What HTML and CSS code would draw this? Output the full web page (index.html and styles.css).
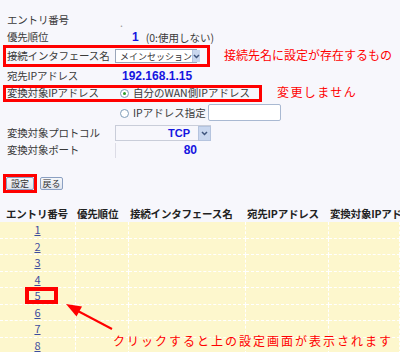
FILE: index.html
```html
<!DOCTYPE html>
<html lang="ja">
<head>
    <meta charset="utf-8">
    <meta name="viewport" content="width=device-width,initial-scale=1.0">
    <title>アドレス変換 設定</title>
    <link rel="stylesheet" href="styles.css">
</head>
<body>

    <div class="form">
        <div class="row">
            <span class="label">エントリ番号</span>
            <span class="dot">.</span>
        </div>
        <div class="row row-short">
            <span class="label">優先順位</span>
            <span class="num prio">1</span>
            <span class="note">(0:使用しない)</span>
        </div>
        <div class="row row-hl">
            <div class="hl hl-if">
                <span class="label">接続インタフェース名</span>
                <span class="select sel-if">
                    <span class="sel-text">メインセッション</span>
                    <span class="sel-btn">
                        <svg width="7" height="5" viewBox="0 0 7 5"><path d="M1 1 L3.5 3.5 L6 1" fill="none" stroke="#3f557d" stroke-width="1.5"/></svg>
                    </span>
                </span>
            </div>
            <span class="memo memo-if">接続先名に設定が存在するもの</span>
        </div>
        <div class="row">
            <span class="label">宛先IPアドレス</span>
            <span class="num addr">192.168.1.15</span>
        </div>
        <div class="row row-hl row-ip">
            <div class="hl hl-ip">
                <span class="label">変換対象IPアドレス</span>
                <span class="radio checked"></span>
                <span class="opt">自分のWAN側IPアドレス</span>
            </div>
            <span class="memo memo-ip">変更しません</span>
        </div>
        <div class="row row-tall">
            <span class="label"></span>
            <span class="radio"></span>
            <span class="opt">IPアドレス指定</span>
            <span class="text-input"></span>
        </div>
        <div class="row">
            <span class="label">変換対象プロトコル</span>
            <span class="select sel-proto">
                <span class="sel-value">TCP</span>
                <span class="sel-btn">
                    <svg width="7" height="5" viewBox="0 0 7 5"><path d="M1 1 L3.5 3.5 L6 1" fill="none" stroke="#3f557d" stroke-width="1.5"/></svg>
                </span>
            </span>
        </div>
        <div class="row row-short">
            <span class="label">変換対象ポート</span>
            <span class="port">80</span>
        </div>
    </div>

    <div class="buttons">
        <span class="btn-hl"><button class="btn btn-set">設定</button></span>
        <button class="btn btn-back">戻る</button>
    </div>

    <div class="list">
        <div class="grid">
            <div class="th th-first">エントリ番号</div>
            <div class="th">優先順位</div>
            <div class="th">接続インタフェース名</div>
            <div class="th">宛先IPアドレス</div>
            <div class="th">変換対象IPアドレス</div>

            <div class="td td-no"><a href="#">1</a></div><div class="td"></div><div class="td"></div><div class="td"></div><div class="td"></div>
            <div class="td td-no"><a href="#">2</a></div><div class="td"></div><div class="td"></div><div class="td"></div><div class="td"></div>
            <div class="td td-no"><a href="#">3</a></div><div class="td"></div><div class="td"></div><div class="td"></div><div class="td"></div>
            <div class="td td-no"><a href="#">4</a></div><div class="td"></div><div class="td"></div><div class="td"></div><div class="td"></div>
            <div class="td td-no"><a href="#">5</a></div><div class="td"></div><div class="td"></div><div class="td"></div><div class="td"></div>
            <div class="td td-no"><a href="#">6</a></div><div class="td"></div><div class="td"></div><div class="td"></div><div class="td"></div>
            <div class="td td-no"><a href="#">7</a></div><div class="td"></div><div class="td"></div><div class="td"></div><div class="td"></div>
            <div class="td td-no"><a href="#">8</a></div><div class="td"></div><div class="td"></div><div class="td"></div><div class="td"></div>
        </div>

        <!-- annotation over the list -->
        <div class="mark"></div>
        <svg class="arrow" width="400" height="146" viewBox="0 0 400 146">
            <line x1="112" y1="123" x2="76" y2="104" stroke="#f00" stroke-width="2"/>
            <polygon points="66,98 82,100.5 76.5,110.5" fill="#f00"/>
        </svg>
        <div class="memo memo-click">クリックすると上の設定画面が表示されます</div>
    </div>

</body>
</html>
```

FILE: styles.css
```css
body {
    margin: 0;
    width: 400px;
    height: 352px;
    overflow: hidden;
    background: #f7f7fc;
    font-family: "Noto Sans CJK JP", "Noto Sans", sans-serif;
    font-size: 10.5px;
    color: #3a3a3a;
}

/* form rows */
.form {
    padding-top: 11px;
}

.row {
    display: flex;
    align-items: center;
    height: 18px;
    padding-left: 7px;
    white-space: nowrap;
}

.row-short {
    height: 16px;
}

.row-tall {
    height: 22px;
}

.row-hl {
    height: 22px;
    padding-left: 0;
}

.row-ip {
    height: 17px;
}

.label {
    flex: none;
    width: 108px;
    line-height: 1;
    letter-spacing: -0.2px;
}

.hl {
    display: flex;
    align-items: center;
    box-sizing: border-box;
    height: 100%;
    margin-left: 3px;
    padding-left: 1px;
    border: 3px solid #ff0000;
}

.hl-if {
    width: 207px;
}

.hl-ip {
    width: 259px;
}

.memo {
    color: #ff0000;
    font-size: 12px;
    line-height: 14px;
    white-space: nowrap;
}

.memo-if {
    margin-left: 14px;
    margin-top: -3px;
}

.memo-ip {
    margin-left: 15px;
    margin-top: -4px;
    letter-spacing: 1.4px;
}

.dot {
    margin-left: 5px;
    margin-top: 4px;
    color: #999;
}

.num {
    color: #1515e0;
    font-family: "Liberation Sans", Arial, sans-serif;
    font-weight: bold;
    font-size: 12px;
}

.prio {
    margin-left: 17px;
}

.note {
    margin-left: 7px;
}

.addr {
    margin-left: 7px;
}

/* selects */
.select {
    display: flex;
    align-items: center;
    box-sizing: border-box;
    background: #fff;
}

.sel-if {
    width: 82px;
    height: 14px;
    border: 1px solid #9aa6ba;
}

.sel-text {
    flex: 1;
    padding-left: 4px;
    font-size: 9px;
    color: #333;
}

.sel-btn {
    display: flex;
    align-items: center;
    justify-content: center;
    width: 11px;
    height: 100%;
    background: #c9d7ef;
    border-left: 1px solid #b5c4de;
}

.sel-proto {
    width: 96px;
    height: 16px;
    border: 1px solid #c9cdd9;
    border-right: none;
    background: transparent;
}

.sel-proto .sel-btn {
    height: 13px;
    border: 1px solid #b5c4de;
}

.sel-value {
    flex: 1;
    padding-right: 8px;
    text-align: right;
    color: #1515e0;
    font-family: "Liberation Sans", Arial, sans-serif;
    font-weight: bold;
    font-size: 11px;
}

.port {
    box-sizing: border-box;
    width: 82px;
    height: 15px;
    border-left: 1px solid #dcdce6;
    text-align: right;
    color: #1515e0;
    font-family: "Liberation Sans", Arial, sans-serif;
    font-weight: bold;
    font-size: 12px;
    line-height: 15px;
}

/* radios */
.radio {
    flex: none;
    box-sizing: border-box;
    width: 9px;
    height: 9px;
    margin-left: 5px;
    border: 1px solid #7f9db9;
    border-radius: 50%;
    background: #fff;
    display: flex;
    align-items: center;
    justify-content: center;
}

.radio.checked::after {
    content: "";
    width: 3px;
    height: 3px;
    border-radius: 50%;
    background: #2c9c2c;
}

.opt {
    margin-left: 4px;
    line-height: 1;
}

.text-input {
    box-sizing: border-box;
    width: 73px;
    height: 17px;
    margin-left: 2px;
    margin-top: -2px;
    background: #fff;
    border: 1px solid #a9b9d2;
    border-radius: 2px;
}

/* buttons */
.buttons {
    display: flex;
    align-items: center;
    gap: 3px;
    margin-top: 16px;
    padding-left: 3px;
    height: 19px;
}

.btn-hl {
    display: flex;
    border: 3px solid #ff0000;
}

.btn {
    box-sizing: border-box;
    height: 13px;
    padding: 0;
    border: 1px solid #8ba0c2;
    border-radius: 2px;
    background: linear-gradient(#f6f7fa, #dfe4ee);
    font-family: "Noto Sans CJK JP", sans-serif;
    font-size: 9px;
    line-height: 11px;
    color: #333;
}

.btn-set {
    width: 28px;
}

.btn-back {
    width: 23px;
}

/* entry list */
.list {
    position: relative;
    margin-top: 13px;
}

.grid {
    display: grid;
    grid-template-columns: 76px 53px 117px 83px 1fr;
    grid-template-rows: 16px repeat(8, 16.5px);
}

.th {
    overflow: hidden;
    white-space: nowrap;
    padding-left: 1px;
    font-weight: bold;
    letter-spacing: -0.2px;
    color: #222;
    line-height: 16px;
}

.th-first {
    padding-left: 6px;
}

.td {
    box-sizing: border-box;
    background: #fdf7cd;
    border-right: 1px dashed #fff;
    border-bottom: 1px dashed #fff;
}

.td-no {
    text-align: center;
    line-height: 15px;
}

.td-no a {
    color: #3d4d9e;
    font-size: 11px;
}

.mark {
    position: absolute;
    left: 25px;
    top: 81px;
    width: 33px;
    height: 17px;
    box-sizing: border-box;
    border: 4px solid #ff0000;
}

.arrow {
    position: absolute;
    left: 0;
    top: 0;
}

.memo-click {
    position: absolute;
    left: 113px;
    top: 128px;
    letter-spacing: 2px;
}
```
